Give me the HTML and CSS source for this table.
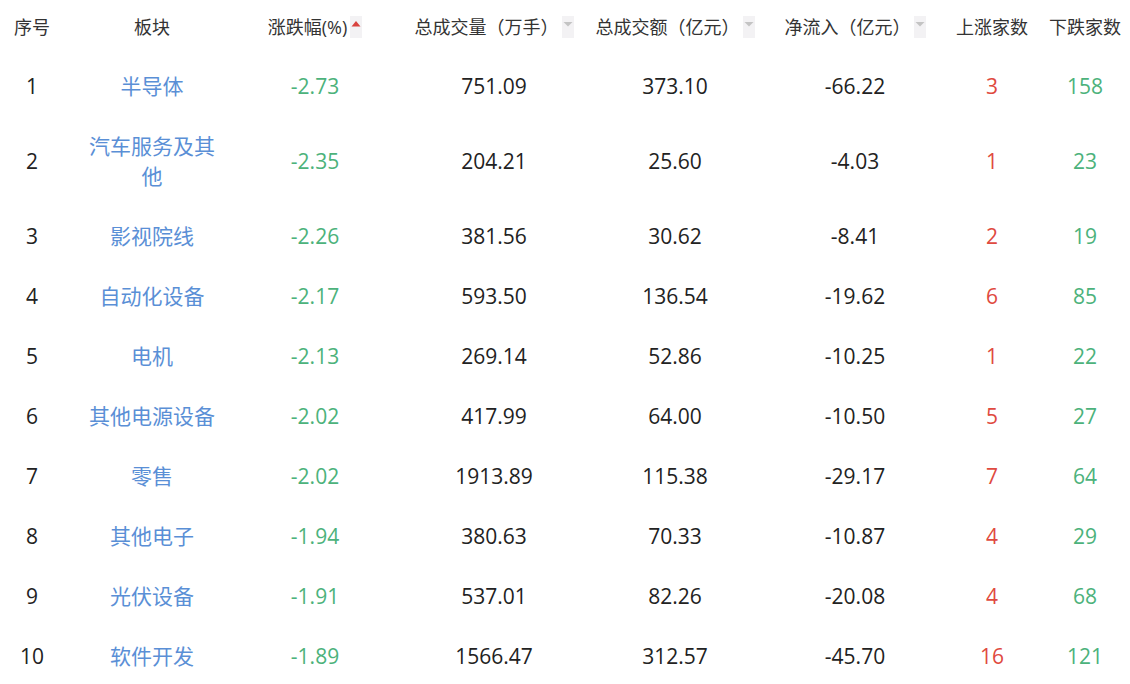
FILE: index.html
```html
<!DOCTYPE html>
<html lang="zh-CN">
<head>
<meta charset="utf-8">
<title>板块资金</title>
<link rel="stylesheet" href="styles.css">
</head>
<body>
<div class="table">
  <div class="row head">
    <div class="c c1">序号</div>
    <div class="c c2">板块</div>
    <div class="c c3">涨跌幅(%)<span class="sort"><svg width="12" height="22" viewBox="0 0 12 22"><polygon points="1.5,10.5 10.5,10.5 6,5" fill="#d9433f"/></svg></span></div>
    <div class="c c4">总成交量（万手）<span class="sort"><svg width="12" height="22" viewBox="0 0 12 22"><polygon points="1.5,6 10.5,6 6,10.5" fill="#c4c4c4"/></svg></span></div>
    <div class="c c5">总成交额（亿元）<span class="sort"><svg width="12" height="22" viewBox="0 0 12 22"><polygon points="1.5,6 10.5,6 6,10.5" fill="#c4c4c4"/></svg></span></div>
    <div class="c c6">净流入（亿元）<span class="sort"><svg width="12" height="22" viewBox="0 0 12 22"><polygon points="1.5,6 10.5,6 6,10.5" fill="#c4c4c4"/></svg></span></div>
    <div class="c c7">上涨家数</div>
    <div class="c c8">下跌家数</div>
  </div>

  <div class="row"><div class="c c1">1</div><div class="c c2 name">半导体</div><div class="c c3 down">-2.73</div><div class="c c4">751.09</div><div class="c c5">373.10</div><div class="c c6">-66.22</div><div class="c c7 up">3</div><div class="c c8 down">158</div></div>
  <div class="row"><div class="c c1">2</div><div class="c c2 name">汽车服务及其他</div><div class="c c3 down">-2.35</div><div class="c c4">204.21</div><div class="c c5">25.60</div><div class="c c6">-4.03</div><div class="c c7 up">1</div><div class="c c8 down">23</div></div>
  <div class="row"><div class="c c1">3</div><div class="c c2 name">影视院线</div><div class="c c3 down">-2.26</div><div class="c c4">381.56</div><div class="c c5">30.62</div><div class="c c6">-8.41</div><div class="c c7 up">2</div><div class="c c8 down">19</div></div>
  <div class="row"><div class="c c1">4</div><div class="c c2 name">自动化设备</div><div class="c c3 down">-2.17</div><div class="c c4">593.50</div><div class="c c5">136.54</div><div class="c c6">-19.62</div><div class="c c7 up">6</div><div class="c c8 down">85</div></div>
  <div class="row"><div class="c c1">5</div><div class="c c2 name">电机</div><div class="c c3 down">-2.13</div><div class="c c4">269.14</div><div class="c c5">52.86</div><div class="c c6">-10.25</div><div class="c c7 up">1</div><div class="c c8 down">22</div></div>
  <div class="row"><div class="c c1">6</div><div class="c c2 name">其他电源设备</div><div class="c c3 down">-2.02</div><div class="c c4">417.99</div><div class="c c5">64.00</div><div class="c c6">-10.50</div><div class="c c7 up">5</div><div class="c c8 down">27</div></div>
  <div class="row"><div class="c c1">7</div><div class="c c2 name">零售</div><div class="c c3 down">-2.02</div><div class="c c4">1913.89</div><div class="c c5">115.38</div><div class="c c6">-29.17</div><div class="c c7 up">7</div><div class="c c8 down">64</div></div>
  <div class="row"><div class="c c1">8</div><div class="c c2 name">其他电子</div><div class="c c3 down">-1.94</div><div class="c c4">380.63</div><div class="c c5">70.33</div><div class="c c6">-10.87</div><div class="c c7 up">4</div><div class="c c8 down">29</div></div>
  <div class="row"><div class="c c1">9</div><div class="c c2 name">光伏设备</div><div class="c c3 down">-1.91</div><div class="c c4">537.01</div><div class="c c5">82.26</div><div class="c c6">-20.08</div><div class="c c7 up">4</div><div class="c c8 down">68</div></div>
  <div class="row"><div class="c c1">10</div><div class="c c2 name">软件开发</div><div class="c c3 down">-1.89</div><div class="c c4">1566.47</div><div class="c c5">312.57</div><div class="c c6">-45.70</div><div class="c c7 up">16</div><div class="c c8 down">121</div></div>
</div>
</body>
</html>
```

FILE: styles.css
```css
html, body {
  margin: 0;
  padding: 0;
  background: #ffffff;
}

body {
  font-family: "Open Sans", "Noto Sans CJK SC", sans-serif;
  color: #222222;
}

.table {
  width: 1130px;
}

.row {
  display: grid;
  grid-template-columns: 64px 176px 150px 208px 154px 192px 96px 90px;
  align-items: center;
  font-size: 21px;
  line-height: 30px;
}

.row .c {
  padding: 15px 0;
  text-align: center;
  white-space: nowrap;
}

.row .c2 {
  padding-left: 20px;
  padding-right: 20px;
  white-space: normal;
}

.row .c6 {
  padding-left: 14px;
}

.head {
  font-size: 18px;
  color: #333333;
  height: 56px;
}

.head .c {
  padding: 0 0 3px 0;
  display: flex;
  justify-content: center;
  align-items: center;
}

.head .c6 {
  padding-left: 14px;
}

.sort {
  display: inline-block;
  width: 12px;
  height: 22px;
  margin-left: 3px;
  background: #f3f2f4;
}

.sort svg {
  display: block;
}

.name {
  color: #5a8fd6;
}

.up {
  color: #df4a40;
}

.down {
  color: #4cb27b;
}
```
